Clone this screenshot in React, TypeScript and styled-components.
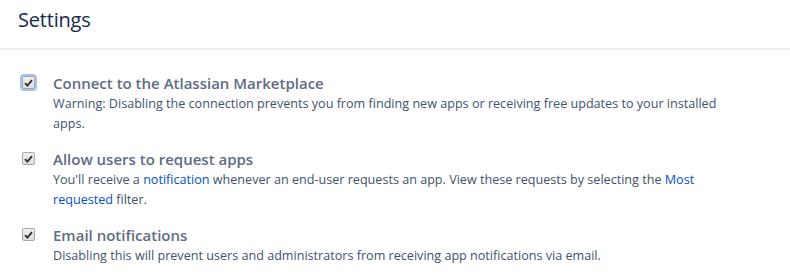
import React from 'react';
import styled, { createGlobalStyle } from 'styled-components';

const GlobalStyle = createGlobalStyle`
  html, body {
    margin: 0;
    padding: 0;
    background: #ffffff;
  }
  body {
    font-family: 'Open Sans', 'Noto Sans', sans-serif;
  }
`;

const Page = styled.div`
  width: 790px;
  height: 277px;
  overflow: hidden;
  background: #ffffff;
`;

const Header = styled.header`
  height: 47px;
  padding: 0 18px;
  display: flex;
  align-items: center;
  border-bottom: 2px solid #ebecf0;
  box-sizing: content-box;
  padding-bottom: 1px;
`;

const Heading = styled.h1`
  margin: 0 0 9px;
  font-size: 20px;
  font-weight: 500;
  color: #172b4d;
  letter-spacing: -0.2px;
`;

const List = styled.div`
  display: flex;
  flex-direction: column;
  gap: 15px;
  padding: 23px 0 0 22px;
`;

const Row = styled.div`
  display: flex;
  align-items: flex-start;
  gap: 18px;
`;

const Box = styled.span<{ $focused?: boolean }>`
  flex: none;
  width: 11px;
  height: 11px;
  margin-top: 3px;
  border: 1px solid #a9a9a9;
  border-radius: 2px;
  background: linear-gradient(#f0f0f0, #dcdcdc);
  display: flex;
  align-items: center;
  justify-content: center;
  box-shadow: ${(p) => (p.$focused ? '0 0 0 2px #a4c2f4' : 'none')};
`;

const Text = styled.div`
  max-width: 680px;
`;

const Title = styled.div`
  font-size: 15px;
  font-weight: 600;
  color: #5e6c84;
  line-height: 20px;
`;

const Description = styled.p`
  margin: 1px 0 0;
  font-size: 12.6px;
  line-height: 20px;
  color: #42526e;
`;

const Link = styled.a`
  color: #0052cc;
  text-decoration: none;
`;

const Check = () => (
  <svg width="9" height="8" viewBox="0 0 9 8">
    <path d="M1 4.2 L3.4 6.6 L8 1.2" fill="none" stroke="#333" strokeWidth="1.9" />
  </svg>
);

const settings = [
  {
    title: 'Connect to the Atlassian Marketplace',
    focused: true,
    body: (
      <>
        Warning: Disabling the connection prevents you from finding new apps or receiving free
        updates to your installed apps.
      </>
    ),
  },
  {
    title: 'Allow users to request apps',
    body: (
      <>
        You'll receive a <Link href="#">notification</Link> whenever an end-user requests an app.
        View these requests by selecting the <Link href="#">Most requested</Link> filter.
      </>
    ),
  },
  {
    title: 'Email notifications',
    body: (
      <>Disabling this will prevent users and administrators from receiving app notifications via email.</>
    ),
  },
];

export default function App() {
  return (
    <Page>
      <GlobalStyle />
      <Header>
        <Heading>Settings</Heading>
      </Header>
      <List>
        {settings.map((s) => (
          <Row key={s.title}>
            <Box $focused={s.focused}>
              <Check />
            </Box>
            <Text>
              <Title>{s.title}</Title>
              <Description>{s.body}</Description>
            </Text>
          </Row>
        ))}
      </List>
    </Page>
  );
}
